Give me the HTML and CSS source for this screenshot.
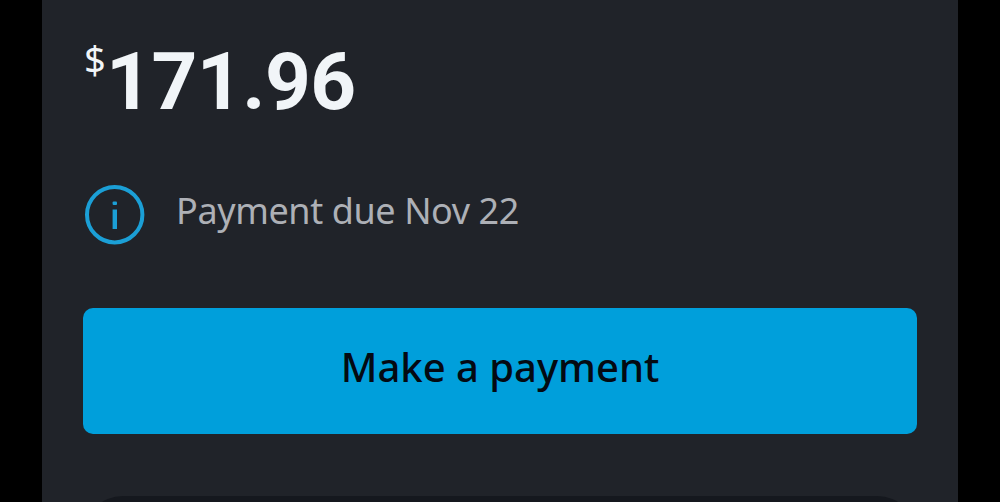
FILE: index.html
```html
<!DOCTYPE html>
<html lang="en">
<head>
    <meta charset="utf-8">
    <title>Payment due</title>
    <link rel="stylesheet" href="styles.css">
</head>
<body>
    <main class="card">
        <div class="amount">
            <span class="currency">$</span>
            <span class="value">171.96</span>
        </div>

        <div class="due">
            <svg class="info-icon" viewBox="0 0 60 60" aria-hidden="true">
                <circle cx="29.7" cy="29.7" r="27.7" fill="none" stroke="currentColor" stroke-width="4"/>
                <rect x="27.6" y="16.5" width="4.4" height="3.6" rx="1" fill="currentColor"/>
                <rect x="27.6" y="24.5" width="4.4" height="19.5" fill="currentColor"/>
            </svg>
            <span class="due-text">Payment due Nov 22</span>
        </div>

        <button class="pay-button" type="button">Make a payment</button>

        <div class="next-panel"></div>
    </main>
</body>
</html>
```

FILE: styles.css
```css
* {
    box-sizing: border-box;
}

body {
    margin: 0;
    height: 502px;
    overflow: hidden;
    background-color: #000;
    font-family: "Noto Sans", sans-serif;
}

.card {
    display: flex;
    flex-direction: column;
    width: 916px;
    height: 502px;
    margin: 0 auto;
    padding: 41px 41px 0;
    background-color: #202329;
    overflow: hidden;
}

.amount {
    display: flex;
    align-items: flex-start;
    height: 80px;
    color: #f1f5f8;
}

.currency {
    width: 23px;
    padding-left: 1px;
    font-size: 38px;
    line-height: 37px;
}

.value {
    font-family: Roboto, sans-serif;
    font-size: 80px;
    font-weight: 700;
    letter-spacing: -0.5px;
    line-height: 82px;
}

.due {
    display: flex;
    align-items: center;
    height: 60px;
    margin-top: 64px;
    padding-left: 2px;
}

.info-icon {
    width: 60px;
    height: 60px;
    color: #1b9fd6;
}

.due-text {
    margin-left: 31px;
    padding-bottom: 8px;
    color: #adb0b6;
    font-size: 36px;
    letter-spacing: -0.4px;
    line-height: 50px;
    white-space: nowrap;
}

.pay-button {
    height: 126px;
    flex-shrink: 0;
    margin-top: 63px;
    padding: 0 0 10px;
    border: none;
    border-radius: 10px;
    background-color: #009fdb;
    color: #040a12;
    font-family: inherit;
    font-size: 40px;
    font-weight: 500;
    cursor: pointer;
}

.next-panel {
    height: 80px;
    flex-shrink: 0;
    margin-top: 62px;
    border-radius: 40px;
    background-color: #15181e;
}
```
